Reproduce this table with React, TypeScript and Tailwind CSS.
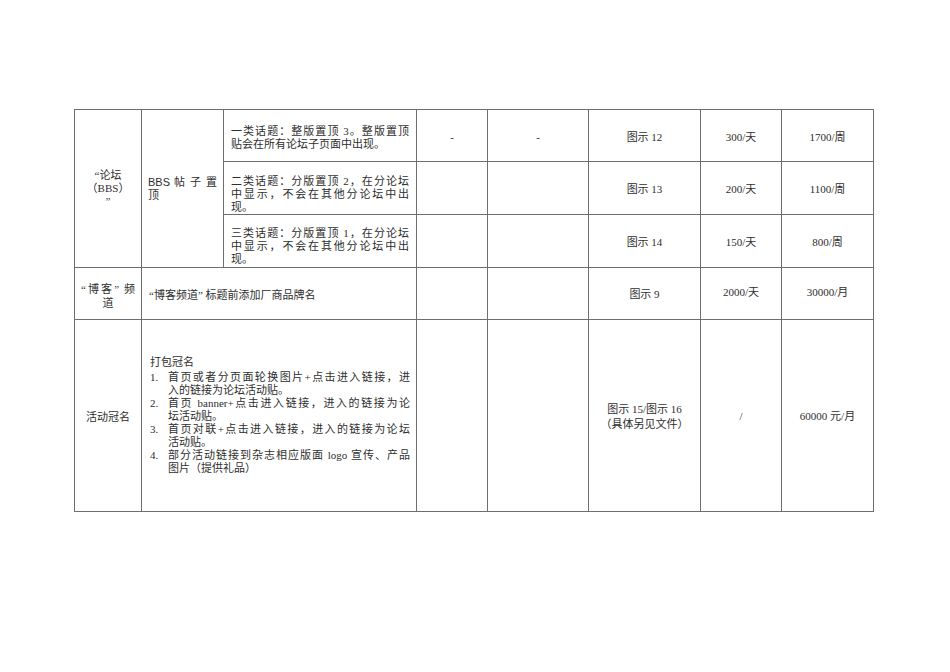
const J = ({ children }: { children: React.ReactNode }) => (
  <div className="text-justify [text-align-last:justify]">{children}</div>
)

const td = "border border-[#6e6e6e] p-0"

function ListItem({ n, first, rest }: { n: string; first: string; rest: string }) {
  return (
    <div className="flex">
      <div className="w-[18px] shrink-0">{n}</div>
      <div className="flex-1">
        <J>{first}</J>
        <div>{rest}</div>
      </div>
    </div>
  )
}

export default function App() {
  return (
    <div className="min-h-[672px] w-[950px] bg-white pl-[74px] pt-[109px] font-['Liberation_Serif','Noto_Sans_CJK_SC',serif] text-[11px] leading-[13px] text-[#2e2e2e]">
      <table className="w-[800px] table-fixed border-collapse">
        <colgroup>
          <col className="w-[67px]" />
          <col className="w-[82px]" />
          <col className="w-[193px]" />
          <col className="w-[71px]" />
          <col className="w-[101px]" />
          <col className="w-[112px]" />
          <col className="w-[81px]" />
          <col className="w-[92px]" />
        </colgroup>
        <tbody>
          <tr className="h-[52px]">
            <td rowSpan={3} className={`${td} px-1 text-center align-middle`}>
              <div>“论坛</div>
              <div>（BBS）</div>
              <div>”</div>
            </td>
            <td rowSpan={3} className={`${td} px-[6px] align-middle`}>
              <J>
                <span className="font-['Liberation_Sans',sans-serif]">BBS</span> 帖 子 置
              </J>
              <div>顶</div>
            </td>
            <td className={`${td} px-[7px] pt-[15px] align-top`}>
              <J>一类话题：整版置顶 3。整版置顶</J>
              <div>贴会在所有论坛子页面中出现。</div>
            </td>
            <td className={`${td} pt-[3px] text-center align-middle`}>-</td>
            <td className={`${td} pt-[3px] text-center align-middle`}>-</td>
            <td className={`${td} pt-[3px] text-center align-middle`}>图示 12</td>
            <td className={`${td} pt-[3px] text-center align-middle`}>300/天</td>
            <td className={`${td} pt-[3px] text-center align-middle`}>1700/周</td>
          </tr>
          <tr className="h-[52px]">
            <td className={`${td} px-[7px] pt-[13px] align-top`}>
              <J>二类话题：分版置顶 2，在分论坛</J>
              <J>中显示，不会在其他分论坛中出</J>
              <div>现。</div>
            </td>
            <td className={td}></td>
            <td className={td}></td>
            <td className={`${td} pt-[3px] text-center align-middle`}>图示 13</td>
            <td className={`${td} pt-[3px] text-center align-middle`}>200/天</td>
            <td className={`${td} pt-[3px] text-center align-middle`}>1100/周</td>
          </tr>
          <tr className="h-[53px]">
            <td className={`${td} px-[7px] pt-[12px] align-top`}>
              <J>三类话题：分版置顶 1，在分论坛</J>
              <J>中显示，不会在其他分论坛中出</J>
              <div>现。</div>
            </td>
            <td className={td}></td>
            <td className={td}></td>
            <td className={`${td} pt-[3px] text-center align-middle`}>图示 14</td>
            <td className={`${td} pt-[3px] text-center align-middle`}>150/天</td>
            <td className={`${td} pt-[3px] text-center align-middle`}>800/周</td>
          </tr>
          <tr className="h-[52px]">
            <td className={`${td} px-[6px] pt-[4px] align-middle leading-[14px]`}>
              <J>“博客” 频</J>
              <div className="text-center">道</div>
            </td>
            <td colSpan={2} className={`${td} px-[7px] pt-[4px] align-middle`}>
              “博客频道” 标题前添加厂商品牌名
            </td>
            <td className={td}></td>
            <td className={td}></td>
            <td className={`${td} pt-[1px] text-center align-middle`}>图示 9</td>
            <td className={`${td} pb-[3px] text-center align-middle`}>2000/天</td>
            <td className={`${td} pb-[3px] text-center align-middle`}>30000/月</td>
          </tr>
          <tr className="h-[192px]">
            <td className={`${td} pt-[4px] text-center align-middle`}>活动冠名</td>
            <td colSpan={2} className={`${td} pl-[8px] pr-[6px] align-middle`}>
              <div className="mb-[2px]">打包冠名</div>
              <ListItem n="1." first="首页或者分页面轮换图片+点击进入链接，进" rest="入的链接为论坛活动贴。" />
              <ListItem n="2." first="首页 banner+点击进入链接，进入的链接为论" rest="坛活动贴。" />
              <ListItem n="3." first="首页对联+点击进入链接，进入的链接为论坛" rest="活动贴。" />
              <ListItem n="4." first="部分活动链接到杂志相应版面 logo 宣传、产品" rest="图片（提供礼品）" />
            </td>
            <td className={td}></td>
            <td className={td}></td>
            <td className={`${td} pt-[2px] text-center align-middle leading-[15px]`}>
              <div>图示 15/图示 16</div>
              <div>（具体另见文件）</div>
            </td>
            <td className={`${td} pt-[2px] text-center align-middle`}>/</td>
            <td className={`${td} pt-[2px] text-center align-middle`}>60000 元/月</td>
          </tr>
        </tbody>
      </table>
    </div>
  )
}
